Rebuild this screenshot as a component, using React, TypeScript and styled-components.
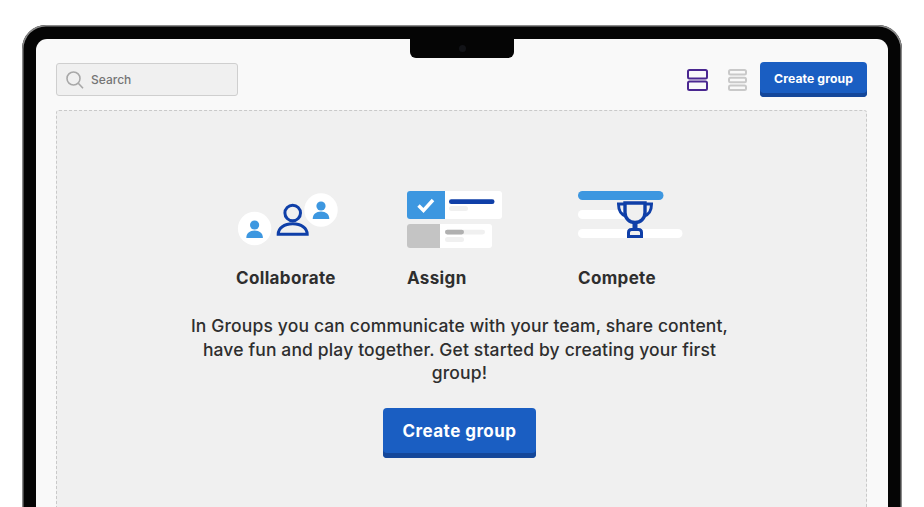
import React from 'react'
import styled, { createGlobalStyle } from 'styled-components'

const color = {
    blue: '#1a5ec2',
    blueDark: '#14479a',
    navy: '#0f3fa8',
    sky: '#3d97e0',
    purple: '#4a2790',
    text: '#2e2e2e',
    panel: '#f0f0f0',
    screen: '#f9f9f9',
}

const GlobalStyle = createGlobalStyle`
    html, body {
        margin: 0;
        height: 507px;
        overflow: hidden;
        background: #fff;
        font-family: Inter, "Liberation Sans", sans-serif;
    }
`

const Page = styled.div`
    height: 507px;
    padding: 25px 22px 0;
    box-sizing: border-box;
    overflow: hidden;
`

const Device = styled.div`
    position: relative;
    height: 560px;
    box-sizing: border-box;
    padding: 14px 14px 0 14px;
    background: #050505;
    border-radius: 24px;
    box-shadow: inset 0 0 0 1.5px #8a8a8a;
`

const Notch = styled.div`
    position: absolute;
    top: 14px;
    left: 388px;
    width: 104px;
    height: 19px;
    background: #050505;
    border-radius: 0 0 6px 6px;
    display: flex;
    align-items: center;
    justify-content: center;

    &::after {
        content: '';
        width: 7px;
        height: 7px;
        border-radius: 50%;
        background: #121317;
    }
`

const Screen = styled.div`
    height: 100%;
    box-sizing: border-box;
    padding: 23px 21px 0 20px;
    background: ${color.screen};
    border-radius: 11px 11px 0 0;
    display: flex;
    flex-direction: column;
    gap: 13px;
`

const Toolbar = styled.div`
    display: flex;
    align-items: center;
    justify-content: space-between;
    height: 35px;
`

const SearchBox = styled.div`
    width: 182px;
    height: 33px;
    box-sizing: border-box;
    display: flex;
    align-items: center;
    gap: 7px;
    padding-left: 9px;
    background: ${color.panel};
    border: 1px solid #cfcfcf;
    border-radius: 3px;
    color: #757575;
    font-size: 12px;
    font-weight: 500;
`

const Actions = styled.div`
    display: flex;
    align-items: center;
`

const ViewToggle = styled.svg<{ $gap: number }>`
    display: block;
    margin-right: ${p => p.$gap}px;
`

const Button = styled.button<{ $large?: boolean }>`
    display: block;
    box-sizing: border-box;
    width: ${p => (p.$large ? '153px' : '107px')};
    height: ${p => (p.$large ? '50px' : '35px')};
    margin: 0;
    padding: 0 0 ${p => (p.$large ? '4px' : '3px')};
    border: 0;
    border-radius: 4px;
    background: ${color.blue};
    box-shadow: inset 0 ${p => (p.$large ? '-5px' : '-4px')} 0 ${color.blueDark};
    color: #fff;
    font-family: inherit;
    font-size: ${p => (p.$large ? '17px' : '12.2px')};
    font-weight: 700;
    letter-spacing: ${p => (p.$large ? '0.45px' : '0.1px')};
`

const Panel = styled.div`
    flex: 1;
    box-sizing: border-box;
    padding-top: 79px;
    background: ${color.panel};
    border: 1px dashed #c9c9c9;
    border-radius: 3px;
    display: flex;
    flex-direction: column;
    align-items: center;
`

const Intro = styled.div`
    width: 560px;
    margin-left: -4px;
    display: flex;
    flex-direction: column;
    align-items: center;
`

const Features = styled.div`
    display: grid;
    grid-template-columns: repeat(3, 105px);
    column-gap: 66px;
`

const Feature = styled.div`
    display: flex;
    flex-direction: column;
    gap: 19px;
`

const FeatureArt = styled.svg`
    display: block;
`

const FeatureName = styled.div`
    color: ${color.text};
    font-size: 17px;
    line-height: 22px;
    font-weight: 700;
    white-space: nowrap;
    letter-spacing: 0.35px;
`

const Copy = styled.p`
    margin: 25px 0 23px;
    color: ${color.text};
    font-size: 17.5px;
    line-height: 23.6px;
    font-weight: 500;
    letter-spacing: 0.14px;
    text-align: center;
`

const Person = ({ x, y }: { x: number; y: number }) => (
    <g fill={color.sky}>
        <circle cx={x} cy={y - 6} r={4.6} />
        <path d={`M${x - 8.3} ${y + 7}c0-4.6 3.4-7.4 8.3-7.4s8.3 2.8 8.3 7.4z`} />
    </g>
)

const CollaborateArt = () => (
    <FeatureArt width="105" height="58" viewBox="0 0 105 58">
        <circle cx="85" cy="20" r="16.7" fill="#fff" />
        <circle cx="18.6" cy="38.5" r="16.7" fill="#fff" />
        <Person x={85} y={22} />
        <Person x={18.6} y={41} />
        <g fill="none" stroke={color.navy} strokeWidth="3">
            <circle cx="56.7" cy="23" r="7.8" />
            <path d="M42.2 44.3c0-6.2 6-10.6 14.5-10.6s14.5 4.4 14.5 10.6z" />
        </g>
    </FeatureArt>
)

const AssignArt = () => (
    <FeatureArt width="105" height="58" viewBox="0 0 105 58">
        <rect y="1" width="95" height="28" rx="3" fill="#fff" />
        <path d="M3 1h35v28H3a3 3 0 0 1-3-3V4a3 3 0 0 1 3-3z" fill={color.sky} />
        <path d="M11.5 15.5l5 5 9.5-10.5" fill="none" stroke="#fff" strokeWidth="3.4" />
        <rect x="42" y="9.3" width="45.5" height="4.7" rx="2.3" fill={color.navy} />
        <rect x="42" y="16" width="19" height="5" rx="2.5" fill={color.panel} />
        <rect y="34" width="85" height="24" rx="3" fill="#fff" />
        <path d="M3 34h30v24H3a3 3 0 0 1-3-3V37a3 3 0 0 1 3-3z" fill="#c4c4c4" />
        <rect x="38" y="39.7" width="40" height="4.7" rx="2.3" fill={color.panel} />
        <rect x="38" y="39.7" width="19" height="4.7" rx="2.3" fill="#b0b0b0" />
        <rect x="38" y="47" width="19" height="5" rx="2.5" fill={color.panel} />
    </FeatureArt>
)

const CompeteArt = () => (
    <FeatureArt width="105" height="58" viewBox="0 0 105 58">
        <rect y="1" width="85.5" height="9" rx="4.5" fill={color.sky} />
        <rect y="20" width="50" height="9" rx="4.5" fill="#fff" />
        <rect y="39" width="104.5" height="9" rx="4.5" fill="#fff" />
        <path d="M47 13h20v9.5c0 6-4.4 10-10 10s-10-4-10-10z" fill={color.panel} stroke={color.navy} strokeWidth="3.4" />
        <g fill="none" stroke={color.navy} strokeWidth="3">
            <path d="M47 14h-6.5c0 7 2 10.500 8 12.500" />
            <path d="M67 14h6.500c0 7-2 10.500-8 12.500" />
        </g>
        <path d="M54.500 32h5v7h-5z" fill={color.navy} />
        <path d="M50.500 46.500v-4c0-1.800 1-3 3-3h7c2 0 3 1.200 3 3v4z" fill={color.panel} stroke={color.navy} strokeWidth="3" />
    </FeatureArt>
)

export default function App() {
    return (
        <>
            <GlobalStyle />
            <Page>
                <Device>
                    <Notch />
                    <Screen>
                        <Toolbar>
                            <SearchBox>
                                <svg width="18" height="20" viewBox="0 0 18 20" fill="none" stroke="#a8a8a8" strokeWidth="1.6">
                                    <circle cx="7.5" cy="8.5" r="6.5" />
                                    <path d="M12.3 13.3l4.7 5" />
                                </svg>
                                Search
                            </SearchBox>
                            <Actions>
                                <ViewToggle $gap={20} width="21" height="22" viewBox="0 0 21 22" fill="none" stroke={color.purple} strokeWidth="2">
                                    <rect x="1" y="1" width="19" height="8.5" rx="1.5" />
                                    <rect x="1" y="12.5" width="19" height="8.5" rx="1.5" />
                                </ViewToggle>
                                <ViewToggle $gap={13} width="19" height="22" viewBox="0 0 19 22" fill="none" stroke="#c9c9c9" strokeWidth="2">
                                    <rect x="1" y="1" width="17" height="4.5" rx="1.5" />
                                    <rect x="1" y="8.7" width="17" height="4.5" rx="1.5" />
                                    <rect x="1" y="16.4" width="17" height="4.5" rx="1.5" />
                                </ViewToggle>
                                <Button>Create group</Button>
                            </Actions>
                        </Toolbar>
                        <Panel>
                            <Intro>
                                <Features>
                                    <Feature>
                                        <CollaborateArt />
                                        <FeatureName>Collaborate</FeatureName>
                                    </Feature>
                                    <Feature>
                                        <AssignArt />
                                        <FeatureName>Assign</FeatureName>
                                    </Feature>
                                    <Feature>
                                        <CompeteArt />
                                        <FeatureName>Compete</FeatureName>
                                    </Feature>
                                </Features>
                                <Copy>
                                    In Groups you can communicate with your team, share content,
                                    <br />
                                    have fun and play together. Get started by creating your first
                                    <br />
                                    group!
                                </Copy>
                                <Button $large>Create group</Button>
                            </Intro>
                        </Panel>
                    </Screen>
                </Device>
            </Page>
        </>
    )
}
